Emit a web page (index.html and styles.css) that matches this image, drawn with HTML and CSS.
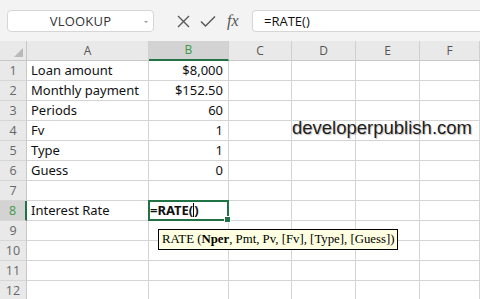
FILE: index.html
```html
<!DOCTYPE html>
<html lang="en">
<head>
    <meta charset="UTF-8">
    <title>RATE</title>
    <link rel="stylesheet" href="styles.css">
</head>
<body>
    <!-- Formula bar -->
    <div class="toolbar">
        <div class="name-box">
            <span class="name-text">VLOOKUP</span>
            <span class="name-arrow"></span>
        </div>
        <div class="bar-icons">
            <svg width="13" height="13" viewBox="0 0 13 13"><path d="M1 1 L12 12 M12 1 L1 12" stroke="#555" stroke-width="1.3" fill="none"/></svg>
            <svg width="16" height="13" viewBox="0 0 16 13"><path d="M1 6.5 L5.5 11 L15 1.5" stroke="#555" stroke-width="1.4" fill="none"/></svg>
            <span class="fx">fx</span>
        </div>
        <div class="formula-input">=RATE()</div>
    </div>

    <!-- Sheet -->
    <div class="sheet">
        <div class="grid">
            <div class="corner"><span class="corner-tri"></span></div>
            <div class="col-head">A</div>
            <div class="col-head active">B</div>
            <div class="col-head">C</div>
            <div class="col-head">D</div>
            <div class="col-head">E</div>
            <div class="col-head">F</div>

            <div class="row-head">1</div><div class="cell">Loan amount</div><div class="cell num">$8,000</div><div class="cell"></div><div class="cell"></div><div class="cell"></div><div class="cell"></div>
            <div class="row-head">2</div><div class="cell">Monthly payment</div><div class="cell num">$152.50</div><div class="cell"></div><div class="cell"></div><div class="cell"></div><div class="cell"></div>
            <div class="row-head">3</div><div class="cell">Periods</div><div class="cell num">60</div><div class="cell"></div><div class="cell"></div><div class="cell"></div><div class="cell"></div>
            <div class="row-head">4</div><div class="cell">Fv</div><div class="cell num">1</div><div class="cell"></div><div class="cell"></div><div class="cell"></div><div class="cell"></div>
            <div class="row-head">5</div><div class="cell">Type</div><div class="cell num">1</div><div class="cell"></div><div class="cell"></div><div class="cell"></div><div class="cell"></div>
            <div class="row-head">6</div><div class="cell">Guess</div><div class="cell num">0</div><div class="cell"></div><div class="cell"></div><div class="cell"></div><div class="cell"></div>
            <div class="row-head">7</div><div class="cell"></div><div class="cell"></div><div class="cell"></div><div class="cell"></div><div class="cell"></div><div class="cell"></div>
            <div class="row-head active">8</div><div class="cell">Interest Rate</div><div class="cell selected"><b>=RATE(</b><span class="caret"></span><b>)</b></div><div class="cell"></div><div class="cell"></div><div class="cell"></div><div class="cell"></div>
            <div class="row-head">9</div><div class="cell"></div><div class="cell"></div><div class="cell"></div><div class="cell"></div><div class="cell"></div><div class="cell"></div>
            <div class="row-head">10</div><div class="cell"></div><div class="cell"></div><div class="cell"></div><div class="cell"></div><div class="cell"></div><div class="cell"></div>
            <div class="row-head">11</div><div class="cell"></div><div class="cell"></div><div class="cell"></div><div class="cell"></div><div class="cell"></div><div class="cell"></div>
            <div class="row-head">12</div><div class="cell"></div><div class="cell"></div><div class="cell"></div><div class="cell"></div><div class="cell"></div><div class="cell"></div>
        </div>

        <div class="watermark">developerpublish.com</div>
        <div class="tooltip">RATE (<b>Nper</b>, Pmt, Pv, [Fv], [Type], [Guess])</div>
    </div>
</body>
</html>
```

FILE: styles.css
```css
* {
    margin: 0;
    padding: 0;
    box-sizing: border-box;
}

body {
    width: 480px;
    height: 299px;
    overflow: hidden;
    background: #fff;
    font-family: 'Open Sans', sans-serif;
    color: #000;
}

/* Formula bar */
.toolbar {
    height: 41px;
    background: #f3f3f3;
    display: flex;
    align-items: flex-start;
    padding: 10px 0 0 7px;
}

.name-box {
    width: 147px;
    height: 22px;
    background: #fff;
    border: 1px solid #d6d6d6;
    border-radius: 4px;
    display: flex;
    align-items: center;
    justify-content: center;
    position: relative;
}

.name-text {
    font-size: 13px;
    color: #333;
    letter-spacing: 0.2px;
}

.name-arrow {
    position: absolute;
    right: 5px;
    top: 10px;
    border-left: 2px solid transparent;
    border-right: 2px solid transparent;
    border-top: 2px solid #999;
}

.bar-icons {
    width: 98px;
    height: 22px;
    display: flex;
    align-items: center;
    gap: 10px;
    padding-left: 23px;
}

.fx {
    font-family: 'Liberation Serif', serif;
    font-style: italic;
    font-size: 16px;
    color: #555;
    margin-left: 1px;
}

.formula-input {
    flex: 1;
    height: 22px;
    background: #fff;
    border: 1px solid #d6d6d6;
    border-right: none;
    border-radius: 4px 0 0 4px;
    font-size: 13px;
    line-height: 20px;
    padding-left: 11px;
    color: #111;
}

/* Sheet */
.sheet {
    position: relative;
}

.grid {
    display: grid;
    grid-template-columns: 27px 122px 80px 63px 64px 64px 60px;
    grid-template-rows: 20px repeat(12, 20px);
}

.corner {
    background: #e9e9e9;
    border-right: 1px solid #c8c8c8;
    border-bottom: 1px solid #c8c8c8;
    position: relative;
}

.corner-tri {
    position: absolute;
    right: 3px;
    bottom: 3px;
    border-left: 9px solid transparent;
    border-bottom: 9px solid #b9b9b9;
}

.col-head {
    background: #e9e9e9;
    border-right: 1px solid #d0d0d0;
    border-bottom: 1px solid #c8c8c8;
    text-align: center;
    font-size: 12px;
    line-height: 19px;
    color: #555;
}

.col-head.active {
    background: #d3d3d3;
    color: #3f9a46;
    border-bottom: 2px solid #217346;
    line-height: 18px;
}

.row-head {
    background: #e9e9e9;
    border-right: 1px solid #c8c8c8;
    border-bottom: 1px solid #d6d6d6;
    text-align: center;
    font-size: 12.5px;
    line-height: 19px;
    color: #666;
}

.row-head.active {
    background: #d3d3d3;
    color: #3f9a46;
    border-right: 2px solid #217346;
}

.cell {
    border-right: 1px solid #d4d4d4;
    border-bottom: 1px solid #d4d4d4;
    font-family: 'Noto Sans', sans-serif;
    font-size: 13px;
    line-height: 19px;
    padding: 0 4px;
    white-space: nowrap;
    color: #111;
}

.cell.num {
    text-align: right;
    padding-right: 5px;
}

.cell.selected {
    position: relative;
    padding-left: 1px;
}

.cell.selected b {
    font-weight: 700;
}

.cell.selected::after {
    content: "";
    position: absolute;
    left: -1px;
    top: -1px;
    right: -1px;
    bottom: -1px;
    border: 2px solid #217346;
}

.cell.selected::before {
    content: "";
    position: absolute;
    right: -3px;
    bottom: -3px;
    width: 5px;
    height: 5px;
    background: #217346;
    border: 1px solid #fff;
    z-index: 2;
}

.caret {
    display: inline-block;
    width: 1px;
    height: 14px;
    background: #000;
    vertical-align: -2px;
}

.watermark {
    position: absolute;
    left: 292px;
    top: 76px;
    font-family: 'Liberation Sans', sans-serif;
    font-size: 18.5px;
    color: #1e1e1e;
    text-shadow: 1px 1px 1px rgba(0, 0, 0, 0.25);
}

.tooltip {
    position: absolute;
    left: 158px;
    top: 188px;
    height: 21px;
    padding: 0 2px 0 3px;
    background: #ffffe1;
    border: 1px solid #000;
    font-family: 'Liberation Serif', serif;
    font-size: 12.8px;
    line-height: 19px;
    white-space: nowrap;
}
```
